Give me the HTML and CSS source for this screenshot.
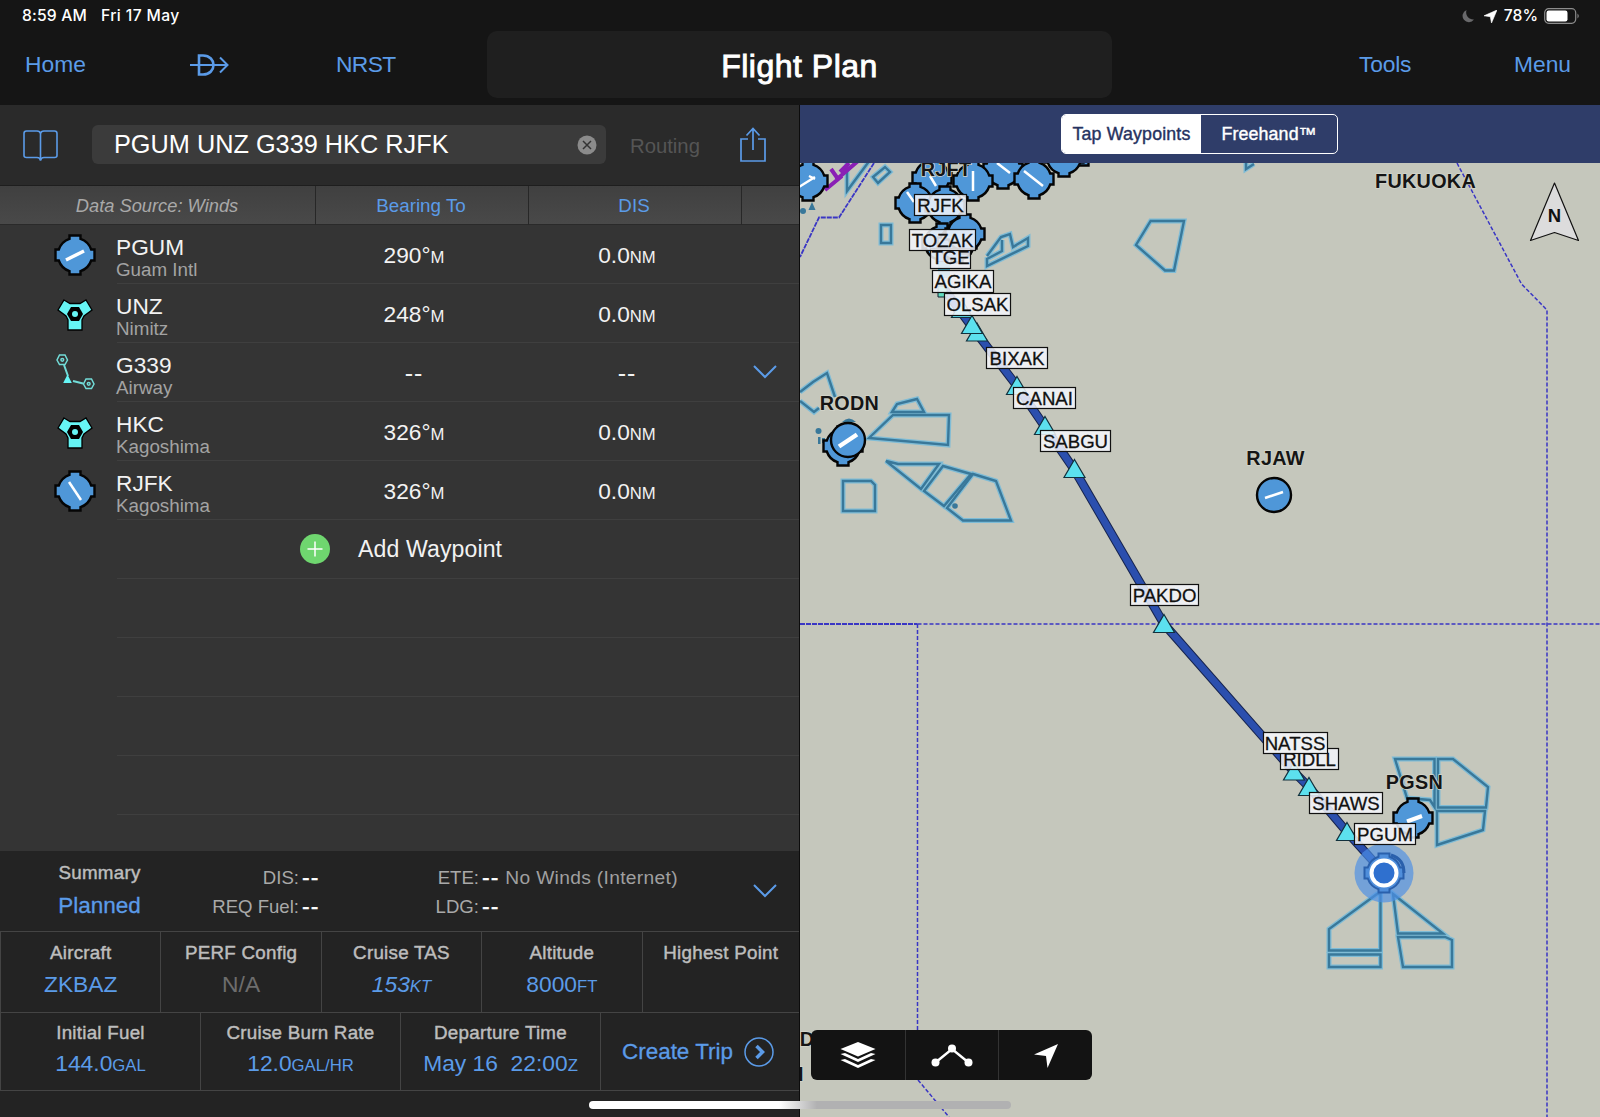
FILE: index.html
```html
<!DOCTYPE html>
<html lang="en">
<head>
    <meta charset="UTF-8">
    <meta name="viewport" content="width=device-width, initial-scale=1.0">
    <title>Flight Plan</title>
    <link rel="stylesheet" href="styles.css">
</head>
<body>
    <!-- shared symbols -->
    <svg class="defs" width="0" height="0">
        <defs>
            <path id="airport" d="M-5.5-19.5H5.500V-16.200A17 17 0 0 1 16.200-5.500H19.500V5.500H16.200A17 17 0 0 1 5.500 16.200V19.500H-5.500V16.200A17 17 0 0 1-16.200 5.500H-19.500V-5.500H-16.200A17 17 0 0 1-5.500-16.200Z"/>
            <path id="fix" d="M0-9.5L10.5 8.5H-10.5Z"/>
            <g id="vor">
                <path d="M-11-14L-5-10.5H5L11-14L17-4L9 2L7 6V16H-7V6L-9 2L-17-4Z" fill="#66f5f5" stroke="#000" stroke-width="1.3"/>
                <path d="M-4-7H4L8 0L4 7H-4L-8 0Z"/>
                <circle r="3" fill="#66f5f5"/>
            </g>
        </defs>
    </svg>

    <header class="top">
        <div class="status">
            <span>8:59 AM</span>
            <span class="date">Fri 17 May</span>
            <span class="status-right">
                <svg width="12" height="14" viewBox="0 0 12 14"><path d="M4.5 1A6.3 6.3 0 1 0 12 10.500C6.500 11 3 6 4.500 1Z" fill="#69696b"/></svg>
                <svg class="loc" width="13" height="13" viewBox="0 0 13 13"><path d="M13 0L7.500 13L6.300 6.700L0 5.800Z" fill="#fff" stroke="#fff" stroke-width=".6"/></svg>
                <span>78%</span>
                <svg class="battery" width="36" height="16" viewBox="0 0 36 16">
                    <rect x=".7" y=".7" width="31" height="14.6" rx="4" fill="none" stroke="#8c8c8c" stroke-width="1.2"/>
                    <rect x="2.5" y="2.5" width="21" height="11" rx="2.2" fill="#fff"/>
                    <path d="M33.5 5.5Q36 8 33.5 10.5Z" fill="#8c8c8c"/>
                </svg>
            </span>
        </div>
        <nav class="nav">
            <a class="home">Home</a>
            <a class="direct">
                <svg width="39" height="22" viewBox="0 0 39 22" fill="none" stroke="#5b9be8" stroke-width="2">
                    <path d="M0 11H37M30 3.5L37.5 11L30 18.5"/>
                    <path d="M9 1.500V20.500H13C27 20.500 27 1.500 13 1.500Z" stroke-width="2.600"/>
                </svg>
            </a>
            <a class="nrst">NRST</a>
            <h1>Flight Plan</h1>
            <a class="tools">Tools</a>
            <a class="menu">Menu</a>
        </nav>
    </header>

    <main class="main">
        <section class="plan">
            <div class="route">
                <svg class="book" width="35" height="32" viewBox="0 0 35 32" fill="none" stroke="#5b9be8" stroke-width="1.6">
                    <path d="M17.5 3.5Q17 1 14 1H3.5Q1 1 1 3.5V25.5Q1 27.5 3.5 27.5H14Q17 27.5 17.5 30.5Q18 27.5 21 27.5H31.5Q34 27.5 34 25.5V3.5Q34 1 31.5 1H21Q18 1 17.5 3.5ZV30"/>
                </svg>
                <div class="route-input">
                    <span>PGUM UNZ G339 HKC RJFK</span>
                    <svg width="20" height="20" viewBox="-10 -10 20 20"><circle r="9.5" fill="#8b8b8b"/><path d="M-4-4L4 4M4-4L-4 4" stroke="#333" stroke-width="1.5"/></svg>
                </div>
                <span class="routing">Routing</span>
                <svg class="share" width="26" height="35" viewBox="0 0 26 35" fill="none" stroke="#5b9be8" stroke-width="1.7">
                    <path d="M8 12H1V34H25V12H18M13 23V2M6.5 8.5L13 1.5L19.5 8.5"/>
                </svg>
            </div>

            <div class="columns">
                <div class="source">Data Source: Winds</div>
                <div>Bearing To</div>
                <div>DIS</div>
                <div></div>
            </div>

            <div class="rows">
                <div class="row">
                    <svg class="icon" width="42" height="42" viewBox="-21 -21 42 42"><use href="#airport" class="airport"/><path d="M-9 5L9-4" stroke="#fff" stroke-width="3.5"/></svg>
                    <div class="wp"><b>PGUM</b><span>Guam Intl</span></div>
                    <div class="val">290°<small>M</small></div>
                    <div class="val">0.0<small>NM</small></div>
                    <div></div>
                </div>
                <div class="row">
                    <svg class="icon" width="42" height="42" viewBox="-21 -21 42 42"><use href="#vor"/></svg>
                    <div class="wp"><b>UNZ</b><span>Nimitz</span></div>
                    <div class="val">248°<small>M</small></div>
                    <div class="val">0.0<small>NM</small></div>
                    <div></div>
                </div>
                <div class="row">
                    <svg class="icon" width="42" height="42" viewBox="-21 -20 42 42" fill="none" stroke="#72dcd8" stroke-width="1.5">
                        <path d="M-11-7L-7 4M-2 9L8 11.5" stroke-width="2"/>
                        <path d="M-15.5-17H-10L-7.5-12L-10-7.5H-15.5L-18-12Z"/><circle cx="-12.7" cy="-12.2" r="1.4"/>
                        <path d="M11 7H16.5L19 12L16.5 16.5H11L8.5 12Z"/><circle cx="13.7" cy="11.800" r="1.4"/>
                        <path d="M-7.5 2.5L-3.2 11H-11.8Z" fill="#66f5f5" stroke="none"/>
                    </svg>
                    <div class="wp"><b>G339</b><span>Airway</span></div>
                    <div class="val dash">--</div>
                    <div class="val dash">--</div>
                    <svg class="chevron" width="24" height="14" viewBox="0 0 24 14"><path d="M1 1L12 12L23 1"/></svg>
                </div>
                <div class="row">
                    <svg class="icon" width="42" height="42" viewBox="-21 -21 42 42"><use href="#vor"/></svg>
                    <div class="wp"><b>HKC</b><span>Kagoshima</span></div>
                    <div class="val">326°<small>M</small></div>
                    <div class="val">0.0<small>NM</small></div>
                    <div></div>
                </div>
                <div class="row">
                    <svg class="icon" width="42" height="42" viewBox="-21 -21 42 42"><use href="#airport" class="airport"/><path d="M-6-9L6 9" stroke="#fff" stroke-width="2.5"/></svg>
                    <div class="wp"><b>RJFK</b><span>Kagoshima</span></div>
                    <div class="val">326°<small>M</small></div>
                    <div class="val">0.0<small>NM</small></div>
                    <div></div>
                </div>
                <div class="row add">
                    <svg width="30" height="30" viewBox="-15 -15 30 30"><circle r="15" fill="#6fd66f"/><path d="M-7.5 0H7.5M0-7.5V7.5" stroke="#fff" stroke-width="1.5"/></svg>
                    <span>Add Waypoint</span>
                </div>
                <div class="row"></div>
                <div class="row"></div>
                <div class="row"></div>
                <div class="row"></div>
            </div>

            <div class="summary">
                <div class="sum-title"><span>Summary</span><a>Planned</a></div>
                <dl class="sum-a">
                    <dt>DIS:</dt><dd>--</dd>
                    <dt>REQ Fuel:</dt><dd>--</dd>
                </dl>
                <dl class="sum-b">
                    <dt>ETE:</dt><dd>-- <em>No Winds (Internet)</em></dd>
                    <dt>LDG:</dt><dd>--</dd>
                </dl>
                <svg class="chevron" width="24" height="14" viewBox="0 0 24 14"><path d="M1 1L12 12L23 1"/></svg>
            </div>

            <div class="cells five">
                <div class="cell"><span>Aircraft</span><a>ZKBAZ</a></div>
                <div class="cell"><span>PERF Config</span><a class="off">N/A</a></div>
                <div class="cell"><span>Cruise TAS</span><a class="it">153<small>KT</small></a></div>
                <div class="cell"><span>Altitude</span><a>8000<small>FT</small></a></div>
                <div class="cell"><span>Highest Point</span></div>
            </div>
            <div class="cells four">
                <div class="cell"><span>Initial Fuel</span><a>144.0<small>GAL</small></a></div>
                <div class="cell"><span>Cruise Burn Rate</span><a>12.0<small>GAL/HR</small></a></div>
                <div class="cell"><span>Departure Time</span><a>May 16&nbsp; 22:00<small>Z</small></a></div>
                <div class="cell trip">
                    <a>Create Trip</a>
                    <svg width="30" height="30" viewBox="-15 -15 30 30" fill="none" stroke="#5b9be8"><circle r="14" stroke-width="1.5"/><path d="M-2.5-6L3.5 0L-2.5 6" stroke-width="3.5"/></svg>
                </div>
            </div>
        </section>

        <section class="map-side">
            <div class="mode-bar">
                <div class="segmented">
                    <span class="on">Tap Waypoints</span>
                    <span>Freehand™</span>
                </div>
            </div>
            <div class="map">
                <svg width="800" height="954" viewBox="800 163 800 954">
                    <!-- special use airspace: light halo, dark core -->
                    <g class="halo"><use href="#airspace"/></g>
                    <g class="core">
                        <g id="airspace">
                            <path d="M881 225H891V243H881Z"/>
                            <path d="M873 177L885 167L890 172L878 183Z"/>
                            <path d="M847 160V191L870 160"/>
                            <path d="M987 256L1001 237L1010 234L1013 247L1028 238V246L987 266V259L1002 251V240"/>
                            <path d="M800 392L813 382L827 373L835 397M800 401L814 412L819 408"/>
                            <path d="M869 438L893 415H949L948 445Z"/>
                            <path d="M892 412L897 404L917 399L924 412Z"/>
                            <path d="M886 461L898 464H939L921 489Z"/>
                            <path d="M943 466L971 474L944 506L924 491Z"/>
                            <path d="M973 474L996 481L1011 520.5H963L947 508Z"/>
                            <path d="M843 481H871L875 485V511H843Z"/>
                            <path d="M1150.6 221H1184L1174 270.5H1165L1136 245Z"/>
                            <path d="M1246 158V169L1254 164"/>
                            <path d="M1395 759H1434.5V807L1430 800L1407 798Z"/>
                            <path d="M1438 759H1453L1488 787L1486 807.5H1438Z"/>
                            <path d="M1437 811H1485L1483 830L1437 845Z"/>
                            <path d="M1377 894H1380.5V950.5H1329V929Z"/>
                            <path d="M1329 954.5H1380.5V967H1329Z"/>
                            <path d="M1393 894L1443 933.5H1398Z"/>
                            <path d="M1398 937H1445L1452 940V967H1403Z"/>
                        </g>
                    </g>
                    <g fill="#39789a">
                        <circle cx="955" cy="506" r="2.8"/>
                        <circle cx="818.5" cy="431" r="3"/>
                        <path d="M818 437H820.500V444H818ZM822 438H825V443H822Z"/>
                        <circle cx="803" cy="211" r="3"/>
                        <path d="M812 202L815.5 210H808.5Z"/>
                        <path d="M842 422Q849 415 856 422Z"/>
                    </g>

                    <!-- FIR boundaries -->
                    <g class="fir">
                        <path d="M1457 163L1521.5 284L1547 310V1117"/>
                        <path d="M917.5 624H1600"/>
                        <path d="M917.5 624V1030M918 1080L949 1117"/>
                    </g>
                    <path class="fir solid" d="M874 163L839 217.5H819L800 257M800 624H917.5"/>
                    <path d="M825 190L842 176M831 169L838 179M836 180L858 161M840 172L849 163" fill="none" stroke="#8a1fb5" stroke-width="4"/>

                    <!-- airports -->
                    <g class="airport">
                        <use href="#airport" x="1083" y="146"/>
                        <use href="#airport" x="1064" y="157"/>
                        <use href="#airport" x="1003" y="169"/>
                        <use href="#airport" x="1034" y="179"/>
                        <use href="#airport" x="932" y="178"/>
                        <use href="#airport" x="973" y="181"/>
                        <use href="#airport" x="915" y="203"/>
                        <use href="#airport" x="945" y="206"/>
                        <use href="#airport" x="942" y="243"/>
                        <use href="#airport" x="957" y="243"/>
                        <use href="#airport" x="965" y="234"/>
                        <use href="#airport" x="808" y="181"/>
                        <use href="#airport" x="843" y="446"/>
                        <circle cx="848" cy="440" r="17"/>
                        <circle cx="1274" cy="495" r="17"/>
                        <use href="#airport" x="1413" y="818"/>
                    </g>
                    <g class="runway">
                        <path d="M1024 171L1043 186M997 163L1010 173M973 171V191M930 176L936 186M907 192L914 202"/>
                        <path d="M799 187L815 177M809 176L815 179"/>
                        <path d="M839 446.5L857 434.5" stroke-width="4.5"/>
                        <path d="M1265 498L1283 492"/>
                        <path d="M1407 821.5L1422 816" stroke-width="4"/>
                    </g>

                    <!-- active route -->
                    <path d="M945 290L972 327L1017 386L1045 427L1074.5 470L1164 624L1294 772L1309 787L1347 832L1384 873" fill="none" stroke="#17244e" stroke-width="9"/>
                    <path d="M945 290L972 327L1017 386L1045 427L1074.5 470L1164 624L1294 772L1309 787L1347 832L1384 873" fill="none" stroke="#2b4fae" stroke-width="7"/>
                    <path d="M938 262H950V278H938Z" fill="#4aa3b5"/>
                    <path d="M938 286H947V297H938Z" fill="#62dcc0" stroke="#123"/>
                    <g class="fix">
                        <use href="#fix" x="962" y="309"/>
                        <use href="#fix" x="977" y="332.5"/>
                        <use href="#fix" x="972" y="325"/>
                        <use href="#fix" x="1017" y="386"/>
                        <use href="#fix" x="1045" y="426"/>
                        <use href="#fix" x="1074.5" y="469"/>
                        <use href="#fix" x="1164" y="624"/>
                        <use href="#fix" x="1294" y="771.5"/>
                        <use href="#fix" x="1309" y="787"/>
                        <use href="#fix" x="1347" y="832"/>
                    </g>

                    <!-- region and airport names -->
                    <g class="name">
                        <text x="1425.5" y="188">FUKUOKA</text>
                        <text x="849.5" y="410">RODN</text>
                        <text x="1275.5" y="465">RJAW</text>
                        <text x="1414.5" y="789">PGSN</text>
                        <text x="946" y="176">RJFT</text>
                        <text x="807" y="1046">D</text>
                        <text x="801" y="1081">I</text>
                    </g>

                    <!-- ownship -->
                    <circle cx="1384" cy="873" r="29.5" fill="#4d8fe6" opacity=".68"/>
                    <use href="#airport" x="1384" y="873" fill="#4f8edb" stroke="#2a60ac" stroke-width="2"/>
                    <path d="M1391 855Q1404 859 1404 873" fill="none" stroke="#2a60ac" stroke-width="3"/>
                    <circle cx="1384" cy="873" r="12.5" fill="#2f70cf" stroke="#fff" stroke-width="4"/>

                    <!-- fix labels -->
                    <g class="label">
                        <rect x="930.5" y="248.5" width="40" height="20"/><text x="950.5" y="264">TGE</text>
                        <rect x="914.5" y="194.5" width="52" height="21"/><text x="940.5" y="211.5">RJFK</text>
                        <rect x="909.5" y="229.5" width="66" height="21"/><text x="942.5" y="246.5">TOZAK</text>
                        <rect x="932.5" y="270.5" width="61" height="22"/><text x="963" y="288">AGIKA</text>
                        <rect x="944.5" y="293.5" width="66" height="22"/><text x="977.5" y="311">OLSAK</text>
                        <rect x="986.5" y="347.5" width="61" height="21"/><text x="1017" y="364.5">BIXAK</text>
                        <rect x="1013.5" y="387.5" width="62" height="21"/><text x="1044.5" y="404.5">CANAI</text>
                        <rect x="1040.5" y="430.5" width="70" height="21"/><text x="1075.5" y="447.5">SABGU</text>
                        <rect x="1130.5" y="584.5" width="68" height="21"/><text x="1164.5" y="601.5">PAKDO</text>
                        <rect x="1280.5" y="748.5" width="58" height="21"/><text x="1309.5" y="765.5">RIDLL</text>
                        <rect class="front" x="1263.5" y="732.5" width="64" height="21"/><text x="1295" y="749.5">NATSS</text>
                        <rect x="1309.5" y="792.5" width="73" height="21"/><text x="1346" y="809.5">SHAWS</text>
                        <rect x="1354.5" y="823.5" width="61" height="21"/><text x="1385" y="840.5">PGUM</text>
                    </g>

                    <!-- north arrow -->
                    <path d="M1554.5 183L1578.5 240.5L1554.5 232.5L1530.5 240.5Z" fill="#dcdcdc" stroke="#111" stroke-width="1.2" stroke-linejoin="round"/>
                    <text class="north" x="1554.5" y="222">N</text>
                </svg>

                <div class="map-tools">
                    <button><svg width="36" height="28" viewBox="0 0 36 28" fill="#fff"><path d="M18 0L35.5 7L18 14.5L.5 7Z"/><path d="M.5 12L5 11L18 17L31 11L35.5 12L18 20Z"/><path d="M.5 18L5 17L18 23L31 17L35.5 18L18 26Z"/></svg></button>
                    <button><svg width="42" height="24" viewBox="0 0 42 24" fill="#fff"><path d="M4.5 18.5L21 5L37.5 18.5" fill="none" stroke="#fff" stroke-width="2.5"/><circle cx="21" cy="4.5" r="4"/><circle cx="4.5" cy="18.5" r="4"/><circle cx="37.5" cy="18.5" r="4"/></svg></button>
                    <button><svg width="24" height="24" viewBox="0 0 24 24" fill="#fff"><path d="M24 0L13.5 24L12 12L0 10.5Z"/></svg></button>
                </div>
            </div>
        </section>
    </main>
    <div class="home-indicator"></div>
</body>
</html>
```
FILE: styles.css
```css
* {
    box-sizing: border-box;
}
body {
    margin: 0;
    width: 1600px;
    height: 1117px;
    overflow: hidden;
    position: relative;
    display: flex;
    flex-direction: column;
    font-family: "Liberation Sans", Arial, sans-serif;
    background: #151515;
    color: #f2f2f2;
}
svg {
    display: block;
    flex: none;
}
.defs {
    position: absolute;
}
a {
    color: #5b9be8;
}

/* top bar */
.top {
    height: 105px;
    background: #151515;
}
.status {
    display: flex;
    align-items: center;
    height: 31px;
    padding: 1px 22px 0;
    font: 500 15.7px/30px Inter, sans-serif;
    letter-spacing: 0.15px;
    color: #fff;
}
.date {
    margin-left: 14px;
    letter-spacing: 0.4px;
}
.status-right {
    display: flex;
    align-items: center;
    margin-left: auto;
    letter-spacing: 0;
}
.loc {
    margin: 0 7px 0 10px;
}
.battery {
    margin: 0 -2px 0 6px;
}
.nav {
    display: grid;
    grid-template-columns: 165px 146px 176px 625px 1fr 1fr;
    align-items: center;
    height: 67px;
    font-size: 22.8px;
}
.home {
    padding-left: 25px;
}
.direct {
    padding-left: 25px;
}
.nrst {
    padding-left: 25px;
    letter-spacing: -0.6px;
}
.nav h1 {
    margin: 0;
    height: 67px;
    border-radius: 10px;
    background: #1f1f1f;
    color: #fff;
    font-size: 32px;
    font-weight: normal;
    line-height: 70px;
    text-align: center;
    letter-spacing: 0.5px;
    -webkit-text-stroke: 0.9px #fff;
}
.tools {
    padding-left: 247px;
    letter-spacing: -0.2px;
}
.menu {
    padding-right: 29px;
    text-align: right;
}

.main {
    display: flex;
    flex: 1;
}

/* left panel */
.plan {
    width: 800px;
    display: flex;
    flex-direction: column;
    border-right: 1px solid #0c0c0c;
    background: #232323;
}
.route {
    display: flex;
    align-items: center;
    height: 81px;
    padding: 0 33px 2px 23px;
    background: #2a2a2a;
    border-bottom: 1px solid #1e1e1e;
}
.book {
    margin-top: 3px;
}
.route-input {
    display: flex;
    align-items: center;
    justify-content: space-between;
    width: 514px;
    height: 39px;
    margin: 1px 0 0 34px;
    padding: 0 9px 0 22px;
    border-radius: 6px;
    background: #3b3b3b;
    color: #fff;
    font-size: 25.3px;
    line-height: 37px;
}
.route-input span {
    margin-top: -1px;
}
.routing {
    margin: 4px auto 0 24px;
    color: #555;
    font-size: 20.3px;
}
.share {
    margin-top: 1px;
}
.columns {
    display: grid;
    grid-template-columns: 315px 213px 213px 1fr;
    height: 39px;
    background: linear-gradient(#404040, #494949);
    border-bottom: 1px solid #2a2a2a;
    color: #5b9be8;
    font-size: 18.8px;
    line-height: 40px;
    text-align: center;
}
.columns div + div {
    padding-right: 2px;
    border-left: 1px solid #272727;
}
.columns .source {
    padding-right: 1px;
    color: #a9a9a9;
    font-size: 18.3px;
    font-style: italic;
}
.rows {
    height: 626px;
    background: #343434;
}
.row {
    display: grid;
    grid-template-columns: 116px 192px 212px 214px 1fr;
    height: 59px;
    background: linear-gradient(#3f3f3f, #3f3f3f) 117px 100% / 100% 1px no-repeat;
}
.icon {
    margin: 9px 0 0 54px;
}
.airport {
    fill: #4f97d8;
    stroke: #050505;
    stroke-width: 2.4;
}
.wp {
    padding-top: 10px;
}
.wp b,
.wp span {
    display: block;
}
.wp b {
    font-size: 22.7px;
    font-weight: normal;
    line-height: 25px;
}
.wp span {
    color: #a3a3a3;
    font-size: 18.8px;
    line-height: 20px;
}
.val {
    font-size: 22.7px;
    line-height: 60px;
    text-align: center;
}
small {
    font-size: 16.7px;
}
.dash {
    font-size: 25px;
    letter-spacing: 0.8px;
}
.chevron {
    fill: none;
    stroke: #5b9be8;
    stroke-width: 2;
}
.row .chevron {
    margin: 22px 0 0 19px;
}
.row.add {
    display: flex;
    align-items: center;
    padding: 0 0 1px 300px;
    font-size: 23.1px;
    letter-spacing: 0.1px;
}
.add span {
    margin-left: 28px;
}

/* summary */
.summary {
    display: flex;
    height: 80px;
    background: #232323;
}
.sum-title {
    width: 199px;
    padding-top: 10px;
    text-align: center;
}
.sum-title span,
.sum-title a {
    display: block;
}
.sum-title span,
.cell span {
    color: #bdbdbd;
    font-size: 18.8px;
    line-height: 24px;
    letter-spacing: 0.25px;
    -webkit-text-stroke: 0.45px #bdbdbd;
}
.sum-title a {
    margin-top: 7px;
    font-size: 22.5px;
    line-height: 28px;
    -webkit-text-stroke: 0.3px #5b9be8;
}
.summary dl {
    display: grid;
    grid-template-rows: 29px 29px;
    align-content: start;
    margin: 12px 0 0;
    font-size: 18.6px;
    line-height: 29px;
}
.sum-a {
    grid-template-columns: 100px 1fr;
    width: 180px;
}
.sum-b {
    grid-template-columns: 100px 1fr;
    width: 374px;
}
.summary dt {
    color: #a9a9a9;
    text-align: right;
}
.summary dd {
    display: flex;
    margin: 0 0 0 3px;
    color: #fff;
    font-size: 23px;
    letter-spacing: 1px;
    -webkit-text-stroke: 0.3px #fff;
}
.summary em {
    margin-left: 6px;
    color: #a0a0a0;
    font-size: 19.2px;
    font-style: normal;
    letter-spacing: 0.33px;
    -webkit-text-stroke: 0;
}
.summary .chevron {
    margin-top: 33px;
}

/* parameter cells */
.cells {
    display: grid;
    border: solid #444;
    border-width: 1px 0 0 1px;
}
.five {
    grid-template-columns: repeat(4, 160.4px) 1fr;
    height: 81px;
}
.four {
    grid-template-columns: repeat(3, 200px) 1fr;
    height: 79px;
    border-bottom-width: 1px;
}
.cell {
    display: flex;
    flex-direction: column;
    align-items: center;
    padding-top: 9px;
    border-right: 1px solid #444;
}
.cell:last-child {
    border-right: 0;
}
.cell a {
    margin-top: 5px;
    font-size: 22.8px;
    line-height: 28px;
}
.four .cell {
    padding-top: 8px;
}
.four .cell a {
    margin-top: 4px;
}
.cell .off {
    color: #6d6d6d;
}
.cell .it {
    font-style: italic;
}
.four .trip {
    flex-direction: row;
    align-items: center;
    justify-content: center;
    gap: 11px;
    padding: 0 4px 0 0;
}
.four .trip a {
    margin: 0;
    font-size: 22.4px;
    -webkit-text-stroke: 0.3px #5b9be8;
}

/* map */
.map-side {
    display: flex;
    flex-direction: column;
    width: 800px;
}
.mode-bar {
    height: 58px;
    padding-top: 9px;
    background: #2f3d69;
}
.segmented {
    display: grid;
    grid-template-columns: 139px 1fr;
    width: 277px;
    height: 40px;
    margin-left: 261px;
    border: 1.5px solid #fff;
    border-radius: 5px;
    overflow: hidden;
    font-size: 17.8px;
    line-height: 39px;
    letter-spacing: 0.15px;
    text-align: center;
    color: #fff;
    -webkit-text-stroke: 0.4px;
}
.segmented .on {
    background: #fff;
    color: #26325f;
}
.map {
    position: relative;
    flex: 1;
    background: #c5c7bc;
}
.halo {
    fill: none;
    stroke: #7fbcd6;
    stroke-width: 5;
}
.core {
    fill: none;
    stroke: #39789a;
    stroke-width: 2.4;
}
.fir {
    fill: none;
    stroke: #3a36c4;
    stroke-width: 1.5;
    stroke-dasharray: 4 2;
}
.fir.solid {
    stroke-width: 1.8;
    stroke-dasharray: 5 1;
}
.runway {
    fill: none;
    stroke: #fff;
    stroke-width: 2.5;
}
.fix {
    fill: #5ce0ee;
    stroke: #12303c;
    stroke-width: 1.2;
}
.name {
    fill: #151515;
    font-size: 19.8px;
    font-weight: bold;
    text-anchor: middle;
    letter-spacing: 0.3px;
    paint-order: stroke;
    stroke: #d3d5ca;
    stroke-width: 1.5;
}
.label rect {
    fill: rgba(245, 246, 250, 0.86);
    stroke: #111;
    stroke-width: 1.2;
}
.label .front {
    fill: #f0f1f3;
}
.label text {
    fill: #111;
    stroke: #111;
    stroke-width: 0.3;
    font-size: 18.6px;
    text-anchor: middle;
}
.north {
    fill: #111;
    font-size: 18.5px;
    font-weight: bold;
    text-anchor: middle;
}
.map-tools {
    position: absolute;
    left: 11px;
    bottom: 37px;
    display: grid;
    grid-template-columns: repeat(3, 1fr);
    width: 281px;
    height: 50px;
    border-radius: 6px;
    background: #131313;
}
.map-tools button {
    display: flex;
    align-items: center;
    justify-content: center;
    padding: 2px 0 0;
    border: 0;
    background: none;
}
.map-tools button + button {
    border-left: 1px solid #333;
}
.home-indicator {
    position: absolute;
    left: 589px;
    bottom: 8px;
    width: 422px;
    height: 8px;
    border-radius: 4px;
    background: linear-gradient(90deg, #fff 45%, #b1b1b2 54%);
}
```
